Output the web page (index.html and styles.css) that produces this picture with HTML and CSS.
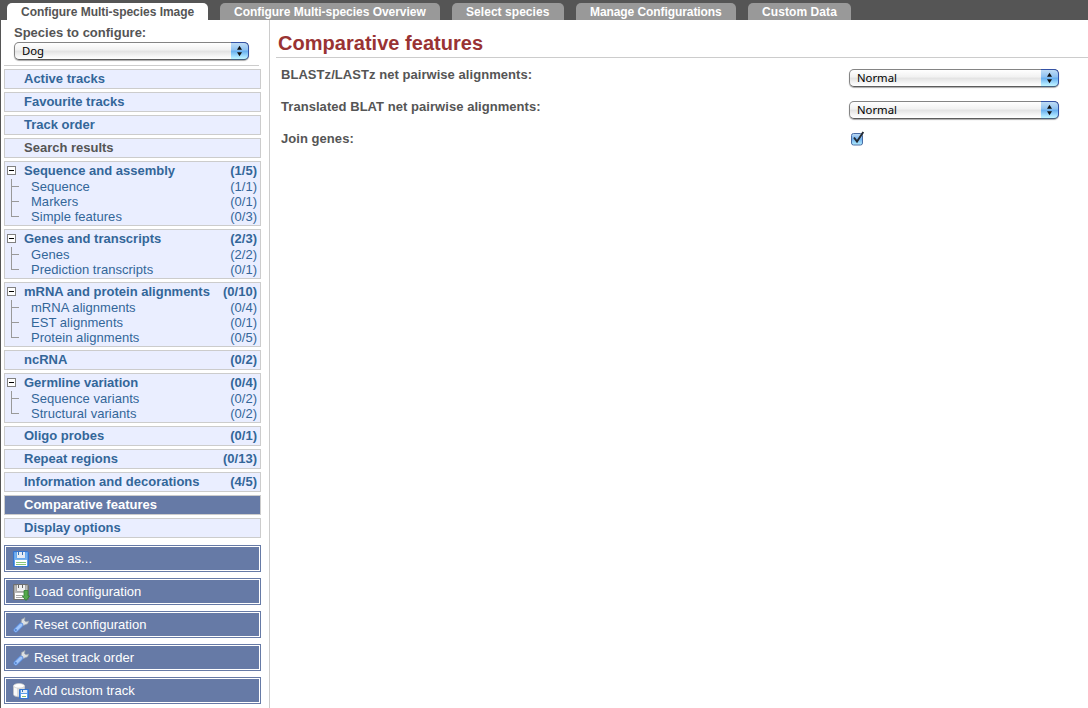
FILE: index.html
```html
<!DOCTYPE html>
<html lang="en">
<head>
<meta charset="utf-8">
<title>Configure Multi-species Image</title>
<link rel="stylesheet" href="styles.css">
</head>
<body>
<svg class="defs" width="0" height="0" aria-hidden="true">
  <symbol id="floppy" viewBox="0 0 16 16">
    <path d="M.5.5h14l1 1v14H.5z" fill="#5b9dea" stroke="#3675cf"/>
    <path d="M1.500 1.500h2v6h9v-6h1.500v8h-12.500z" fill="#79b4f0"/>
    <path d="M4 1h8v6H4z" fill="#e6edf6"/><path d="M5 1h1v3H5zM9 1h1v3H9z" fill="#3974b8"/>
    <path d="M2 9h12v6H2z" fill="#fff"/><path d="M3 11h10v1H3zM3 13h10v1H3z" fill="#8ac779"/>
  </symbol>
  <symbol id="load" viewBox="0 0 17 17">
    <path d="M.5.5h14l1 1v14H.5z" fill="#999" stroke="#707070"/>
    <path d="M1.500 1.500h2v6h9v-6h1.500v8h-12.500z" fill="#bcbcbc"/>
    <path d="M4 1h8v6H4z" fill="#f1f1f1"/><path d="M5 1h1v3H5zM9 1h1v3H9z" fill="#666"/>
    <path d="M2 9h9v6H2z" fill="#fff"/><path d="M3 11h7v1H3zM3 13h7v1H3z" fill="#aaa"/>
    <path d="M11 6.500h4V12h1.700L13 16.500 9.300 12H11z" fill="#55a84c" stroke="#2f8033" stroke-width=".8"/>
  </symbol>
  <symbol id="wrench" viewBox="0 0 16 16">
    <path d="M8 6.500 8.600 2.500 12 .6 11.500 3.500l1.500 1.300L15.700 4l-1 2.800L11.500 8 9.500 9z" fill="#dce0e3" stroke="#9ba2a8" stroke-width=".7"/>
    <path d="M2.800 13.200 8 8" stroke="#5e91e2" stroke-width="4.600" stroke-linecap="round"/>
    <path d="M2.800 13.200 8 8" stroke="#a0c5fa" stroke-width="3" stroke-linecap="round"/>
    <circle cx="2.900" cy="13" r=".9" fill="#487ac8"/>
  </symbol>
  <symbol id="database" viewBox="0 0 16 16">
    <path d="M.5 3v8.500c0 3 11 3 11 0V3z" fill="#ddd" stroke="#ccc" stroke-width=".7"/>
    <path d="M1 4h3v9l-3-1z" fill="#fafafa"/>
    <ellipse cx="6" cy="2.800" rx="5.500" ry="2.300" fill="#fff" stroke="#ccc" stroke-width=".7"/>
    <path d="M6.500 6.500h9v9h-9z" fill="#5b9dea" stroke="#3675cf"/>
    <path d="M8 7h6v3H8z" fill="#e6edf6"/><path d="M9 7h1v2H9z" fill="#3974b8"/><path d="M8 11h6v4H8z" fill="#fff"/><path d="M9 13h4v1H9z" fill="#83bd75"/>
  </symbol>
  <symbol id="arrows" viewBox="0 0 17 16">
    <path d="M6 6.700 8.500 2.700 11 6.700zM6 9.300 8.500 13.300l2.500-4z" fill="#111"/>
  </symbol>
</svg>
<nav class="tabs">
  <a class="tab current w1"><span>Configure Multi-species Image</span></a>
  <a class="tab w2"><span>Configure Multi-species Overview</span></a>
  <a class="tab w3"><span>Select species</span></a>
  <a class="tab w4"><span>Manage Configurations</span></a>
  <a class="tab w5"><span>Custom Data</span></a>
</nav>
<div class="page">
  <aside class="sidebar">
    <div class="species">
      <div class="species-label">Species to configure:</div>
      <div class="select select-species"><span>Dog</span><svg class="stepper"><use href="#arrows"/></svg></div>
    </div>
    <ul class="menu">
      <li><div class="head"><span>Active tracks</span></div></li>
      <li><div class="head"><span>Favourite tracks</span></div></li>
      <li><div class="head"><span>Track order</span></div></li>
      <li class="disabled"><div class="head"><span>Search results</span></div></li>
      <li class="open"><div class="head"><i class="toggle"></i><span>Sequence and assembly</span><b>(1/5)</b></div>
        <ul class="sub"><li><span>Sequence</span><em>(1/1)</em></li><li><span>Markers</span><em>(0/1)</em></li><li><span>Simple features</span><em>(0/3)</em></li></ul></li>
      <li class="open"><div class="head"><i class="toggle"></i><span>Genes and transcripts</span><b>(2/3)</b></div>
        <ul class="sub"><li><span>Genes</span><em>(2/2)</em></li><li><span>Prediction transcripts</span><em>(0/1)</em></li></ul></li>
      <li class="open"><div class="head"><i class="toggle"></i><span>mRNA and protein alignments</span><b>(0/10)</b></div>
        <ul class="sub"><li><span>mRNA alignments</span><em>(0/4)</em></li><li><span>EST alignments</span><em>(0/1)</em></li><li><span>Protein alignments</span><em>(0/5)</em></li></ul></li>
      <li><div class="head"><span>ncRNA</span><b>(0/2)</b></div></li>
      <li class="open"><div class="head"><i class="toggle"></i><span>Germline variation</span><b>(0/4)</b></div>
        <ul class="sub"><li><span>Sequence variants</span><em>(0/2)</em></li><li><span>Structural variants</span><em>(0/2)</em></li></ul></li>
      <li><div class="head"><span>Oligo probes</span><b>(0/1)</b></div></li>
      <li><div class="head"><span>Repeat regions</span><b>(0/13)</b></div></li>
      <li><div class="head"><span>Information and decorations</span><b>(4/5)</b></div></li>
      <li class="active"><div class="head"><span>Comparative features</span></div></li>
      <li><div class="head"><span>Display options</span></div></li>
    </ul>
    <div class="tools">
      <a class="tool"><svg class="icon"><use href="#floppy"/></svg><span>Save as...</span></a>
      <a class="tool"><svg class="icon icon-load"><use href="#load"/></svg><span>Load configuration</span></a>
      <a class="tool"><svg class="icon"><use href="#wrench"/></svg><span>Reset configuration</span></a>
      <a class="tool"><svg class="icon"><use href="#wrench"/></svg><span>Reset track order</span></a>
      <a class="tool"><svg class="icon"><use href="#database"/></svg><span>Add custom track</span></a>
    </div>
  </aside>
  <main class="main">
    <h1>Comparative features</h1>
    <div class="option"><span class="name">BLASTz/LASTz net pairwise alignments:</span><div class="select"><span>Normal</span><svg class="stepper"><use href="#arrows"/></svg></div></div>
    <div class="option"><span class="name">Translated BLAT net pairwise alignments:</span><div class="select"><span>Normal</span><svg class="stepper"><use href="#arrows"/></svg></div></div>
    <div class="option"><span class="name">Join genes:</span>
      <svg class="check" viewBox="0 0 14 16"><defs><linearGradient id="blue" x2="0" y2="1"><stop stop-color="#c2dcf5"/><stop offset=".5" stop-color="#70b1ee"/><stop offset="1" stop-color="#b4f0ff"/></linearGradient></defs><rect x=".5" y="2.500" width="11" height="11.500" rx="2" fill="url(#blue)" stroke="#4a6ca5"/><path d="M3 6.500 6 10.500 12.300 1" fill="none" stroke="#252b33" stroke-width="1.900"/></svg></div>
  </main>
</div>
</body>
</html>
```
FILE: styles.css
```css
* { box-sizing: border-box; }
body { margin: 0; background: #fff; color: #555; font: 13px/15px "Liberation Sans", Arial, sans-serif; font-variant-ligatures: none; overflow: hidden; }
ul { margin: 0; padding: 0; list-style: none; }
.defs { display: none; }
.tabs { display: flex; gap: 12px; height: 20px; padding: 3px 0 0 7px; background: #555; }
.tab { height: 17px; padding-left: 14px; border-radius: 5px 5px 0 0; background: #999; color: #fff; font-size: 12px; font-weight: bold; line-height: 18px; white-space: nowrap; }
.current { background: #fff; color: #555; }
.w1 { width: 201px; letter-spacing: -.03px; }
.w2 { width: 220px; letter-spacing: -.03px; }
.w3 { width: 112px; letter-spacing: .05px; }
.w4 { width: 160px; letter-spacing: -.08px; }
.w5 { width: 103px; letter-spacing: .08px; }
.page { display: flex; height: 688px; }
.sidebar { width: 270px; padding-left: 3px; border-left: 1px solid #555; border-right: 1px solid #ccc; }
.species { width: 255px; height: 46px; padding: 5px 0 0 10px; border-bottom: 1px solid #ccc; }
.species-label { height: 17px; font-weight: bold; line-height: 16px; }
.select { display: flex; justify-content: space-between; width: 210px; height: 18px; padding-left: 7px; border: 1px solid #848484; border-bottom: 1px solid #5c5c5c; border-radius: 5px; background: linear-gradient(#fff, #f1f1f1 45%, #e2e2e2 50%, #f8f8f8 85%, #fff); box-shadow: 0 1px 1px #aaa; color: #000; font: 11.3px/15px "Noto Sans", sans-serif; }
.select-species { width: 235px; }
.stepper { width: 18px; height: 18px; margin: -1px -1px 0 0; border: 1px solid #3452a5; border-left: 0; border-bottom-color: #456080; border-radius: 0 5px 5px 0; background: linear-gradient(#bfdcf5, #8cc0f1 45%, #65adee 50%, #a8e2ff 85%, #c1f6ff); }
.menu { display: grid; gap: 3px; width: 257px; margin-top: 3px; color: #336699; }
.menu > li { border: 1px solid #ccc; background: #eaeeff; }
.menu > .open { padding-bottom: 1px; }
.head { display: flex; position: relative; height: 18px; padding: 1px 3px 0 19px; font-weight: bold; line-height: 16px; }
.menu b { margin-left: auto; }
.open .head { height: 17px; }
.menu > .disabled { color: #555; }
.menu > .active { background: #667aa6; color: #fff; }
.toggle { position: absolute; left: 2px; top: 4px; width: 9px; height: 9px; border: 1px solid #808080; background: linear-gradient(#000, #000) center / 5px 1px no-repeat #fff; }
.sub li { display: flex; position: relative; height: 15px; padding: 0 3px 0 26px; line-height: 16px; letter-spacing: .04px; }
.sub em { margin-left: auto; font-style: normal; letter-spacing: 0; }
.sub li::before { content: ""; position: absolute; left: 6px; top: 0; width: 1px; height: 15px; background: #999; }
.sub li:last-child::before { height: 8px; }
.sub li::after { content: ""; position: absolute; left: 6px; top: 7px; width: 8px; height: 1px; background: #999; }
.tools { display: grid; gap: 6px; width: 257px; margin-top: 7px; }
.tool { display: flex; align-items: center; height: 27px; padding-left: 7px; border: 1px solid #667aa6; background: #667aa6; box-shadow: inset 0 0 0 1px #fff; color: #fff; letter-spacing: .02px; }
.icon { flex: none; width: 16px; height: 16px; margin: 1px 5px 0 1px; }
.icon-load { width: 17px; height: 17px; margin-right: 4px; }
.main { flex: 1; padding: 0 0 0 6px; }
h1 { height: 38px; margin: 0 0 10px; padding: 11px 0 0 2px; border-bottom: 1px solid #ccc; color: #993333; font-size: 20px; line-height: 24px; letter-spacing: .03px; }
.option { display: flex; height: 32px; padding-left: 5px; }
.name { width: 568px; margin-top: -1px; font-weight: bold; line-height: 15px; letter-spacing: .05px; }
.option .select { margin-top: 1px; }
.check { width: 14px; height: 16px; margin: -1px 0 0 2px; }
```
